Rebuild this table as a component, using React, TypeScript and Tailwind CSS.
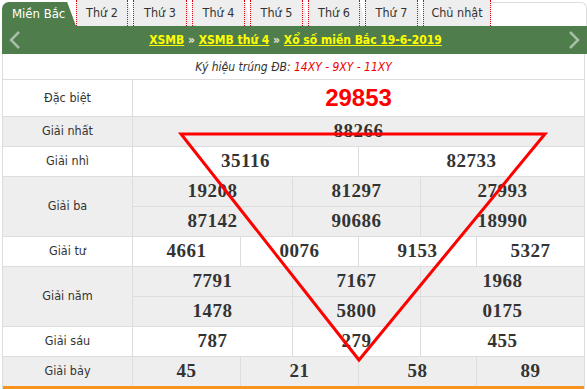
import React from 'react';

type Row = {
  label: string;
  cols: string; // grid template for the number area
  lines: string[][];
  gray?: boolean;
};

const tabs = [
  { name: 'Thứ 2', w: 'w-[52px]' },
  { name: 'Thứ 3', w: 'w-[54px]' },
  { name: 'Thứ 4', w: 'w-[53px]' },
  { name: 'Thứ 5', w: 'w-[53px]' },
  { name: 'Thứ 6', w: 'w-[52px]' },
  { name: 'Thứ 7', w: 'w-[53px]' },
  { name: 'Chủ nhật', w: 'w-[68px]' },
];

const rows: Row[] = [
  { label: 'Giải nhất', cols: 'grid-cols-1', lines: [['88266']], gray: true },
  { label: 'Giải nhì', cols: 'grid-cols-[226px_1fr]', lines: [['35116', '82733']] },
  {
    label: 'Giải ba',
    cols: 'grid-cols-[160px_128px_1fr]',
    lines: [
      ['19208', '81297', '27993'],
      ['87142', '90686', '18990'],
    ],
    gray: true,
  },
  { label: 'Giải tư', cols: 'grid-cols-[108px_118px_118px_1fr]', lines: [['4661', '0076', '9153', '5327']] },
  {
    label: 'Giải năm',
    cols: 'grid-cols-[160px_128px_1fr]',
    lines: [
      ['7791', '7167', '1968'],
      ['1478', '5800', '0175'],
    ],
    gray: true,
  },
  { label: 'Giải sáu', cols: 'grid-cols-[160px_128px_1fr]', lines: [['787', '279', '455']] },
];

const Chevron = ({ dir }: { dir: 'l' | 'r' }) => (
  <svg width="14" height="20" viewBox="0 0 14 20" className="opacity-50">
    <polyline
      points={dir === 'l' ? '11,2 3,10 11,18' : '3,2 11,10 3,18'}
      fill="none"
      stroke="#fff"
      strokeWidth="2.5"
    />
  </svg>
);

const App: React.FC = () => {
  return (
    <div className="relative w-[587px] h-[389px] overflow-hidden bg-white pl-[2px] font-['DejaVu_Sans_Condensed','DejaVu_Sans',sans-serif] text-[#333]">
      {/* tabs */}
      <div className="flex h-[26px] items-end">
        <div className="flex h-[24px] w-[74px] items-center rounded-tl-[7px] bg-[#4f7e4c] pl-[10px] text-[13px] text-white [clip-path:polygon(0_0,88%_0,100%_100%,0_100%)]">
          Miền Bắc
        </div>
        {tabs.map((t, i) => (
          <React.Fragment key={t.name}>
            {i > 0 && <div className="h-[26px] w-[5px] bg-[linear-gradient(to_bottom_left,#fff_50%,#eee_50%)]" />}
            <div
              className={`flex h-[26px] ${t.w} items-center justify-center border-x border-dotted border-x-red-600 bg-[#eee] text-[12.5px] text-[#333]`}
            >
              {t.name}
            </div>
          </React.Fragment>
        ))}
        <div className="h-[24px] flex-1 rounded-tr-[6px] border-r border-t border-[#ddd]" />
      </div>

      {/* title bar */}
      <div className="flex h-[28px] w-[585px] items-center justify-between bg-[#4f7e4c] px-[6px]">
        <Chevron dir="l" />
        <div className="pl-[2px] text-[12px] font-bold text-[#ffff00]">
          <a className="underline">XSMB</a>
          <span className="text-[#e8e8d0]"> » </span>
          <a className="underline">XSMB thứ 4</a>
          <span className="text-[#e8e8d0]"> » </span>
          <a className="underline">Xổ số miền Bắc 19-6-2019</a>
        </div>
        <Chevron dir="r" />
      </div>

      {/* result frame */}
      <div className="w-[583px] border-x border-[#ddd]">
        <div className="flex h-[26px] items-center justify-center border-b border-[#ddd] text-[12px] italic">
          Ký hiệu trúng ĐB:&nbsp;<span className="text-[#e00]">14XY - 9XY - 11XY</span>
        </div>

        <div className="grid h-[37px] grid-cols-[130px_1fr] border-b border-[#ddd]">
          <div className="flex items-center justify-center border-r border-[#ddd] text-[12.5px]">Đặc biệt</div>
          <div className="flex items-center justify-center font-['Liberation_Sans',Arial,sans-serif] text-[24px] font-bold text-[#f00]">
            29853
          </div>
        </div>

        {rows.map((r) => (
          <div key={r.label} className={`grid grid-cols-[130px_1fr] border-b border-[#ddd] ${r.gray ? 'bg-[#eee]' : ''}`}>
            <div className="flex items-center justify-center border-r border-[#ddd] text-[12.5px]">{r.label}</div>
            <div>
              {r.lines.map((line, li) => (
                <div
                  key={li}
                  className={`grid h-[29px] ${r.cols} ${li < r.lines.length - 1 ? 'h-[30px] border-b border-[#ddd]' : ''}`}
                >
                  {line.map((n, ni) => (
                    <div
                      key={ni}
                      className={`flex items-center justify-center font-['Liberation_Serif',serif] text-[19px] font-bold tracking-[0.5px] text-[#333] ${
                        ni < line.length - 1 ? 'border-r border-[#ddd]' : ''
                      }`}
                    >
                      {n}
                    </div>
                  ))}
                </div>
              ))}
            </div>
          </div>
        ))}

        <div className="grid h-[32px] grid-cols-[130px_1fr] border-b-[3px] border-b-[#f7931e] bg-[#eee]">
          <div className="flex items-center justify-center border-r border-[#ddd] text-[12.5px]">Giải bảy</div>
          <div className="grid grid-cols-[108px_118px_118px_1fr]">
            {['45', '21', '58', '89'].map((n, ni) => (
              <div
                key={n}
                className={`flex items-center justify-center font-['Liberation_Serif',serif] text-[19px] font-bold tracking-[0.5px] text-[#333] ${
                  ni < 3 ? 'border-r border-[#ddd]' : ''
                }`}
              >
                {n}
              </div>
            ))}
          </div>
        </div>
      </div>

      {/* red marker drawn over the results */}
      <svg className="pointer-events-none absolute left-0 top-0" width="587" height="389">
        <polygon points="181,134 545,134 359,360" fill="none" stroke="#f00" strokeWidth="3" strokeLinejoin="miter" />
      </svg>
    </div>
  );
};

export default App;
